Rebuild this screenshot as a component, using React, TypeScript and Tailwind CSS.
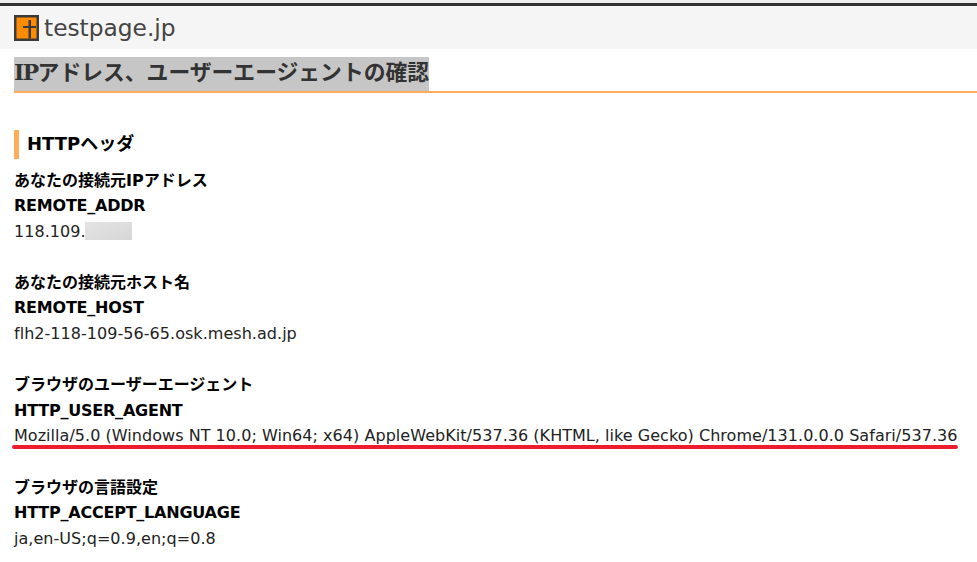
import React from "react";

const sections = [
  { title: "あなたの接続元IPアドレス", name: "REMOTE_ADDR", value: "118.109.", masked: true },
  { title: "あなたの接続元ホスト名", name: "REMOTE_HOST", value: "flh2-118-109-56-65.osk.mesh.ad.jp" },
  { title: "ブラウザのユーザーエージェント", name: "HTTP_USER_AGENT", value: "Mozilla/5.0 (Windows NT 10.0; Win64; x64) AppleWebKit/537.36 (KHTML, like Gecko) Chrome/131.0.0.0 Safari/537.36", marked: true },
  { title: "ブラウザの言語設定", name: "HTTP_ACCEPT_LANGUAGE", value: "ja,en-US;q=0.9,en;q=0.8" },
];

function Logo() {
  return (
    <svg width="25" height="26" viewBox="0 0 25 26" className="shrink-0">
      <rect width="25" height="26" fill="#3a3a3a" />
      <rect x="2.5" y="2.5" width="20" height="21" fill="#ff8c00" />
      <rect x="14.5" y="5" width="2.5" height="18.5" fill="#3a3a3a" />
      <rect x="9" y="11" width="13" height="2" fill="#3a3a3a" />
    </svg>
  );
}

export default function App() {
  return (
    <div className="h-[562px] overflow-hidden bg-white font-['DejaVu_Sans','Noto_Sans_CJK_JP',sans-serif] text-[16px] text-[#222]">
      <div className="bg-[#eeeeee] pt-[3px]">
        <div className="flex h-[46px] items-center gap-[5px] border-t-[3px] border-[#333] bg-[#f5f5f5] pl-[14px]">
          <Logo />
          <span className="text-[23.3px] leading-none text-[#444]">testpage.jp</span>
        </div>
      </div>
      <div className="pl-[14px] pt-[8px]">
        <div className="border-b-2 border-[#ffad5a]">
          <h1 className="h-[34px] w-[415px] bg-[#c6c6c6] text-[21.8px] font-bold leading-[32px] text-[#333] whitespace-nowrap">
            <span className="font-['DejaVu_Serif',serif] tracking-[-1.5px]">IP</span>アドレス、ユーザーエージェントの確認
          </h1>
        </div>
        <h2 className="mt-[37px] h-[29px] border-l-[5px] border-[#ffad5a] pl-[8px] text-[18px] font-bold leading-[27px] text-black">
          HTTPヘッダ
        </h2>
        <div className="mt-[8.5px] flex flex-col gap-[25.6px]">
          {sections.map((s) => (
            <div key={s.name} className="leading-[25.6px]">
              <div className="font-bold text-black">{s.title}</div>
              <div className="font-bold tracking-[-0.22px] text-black">{s.name}</div>
              <div className="relative whitespace-nowrap tracking-[0.04px]">
                {s.value}
                {s.masked && (
                  <span className="absolute left-[71px] top-[3px] h-[18px] w-[47px] bg-gradient-to-br from-[#e4e4e4] to-[#d6d6d6]" />
                )}
                {s.marked && (
                  <span className="absolute left-[-2px] top-[22px] h-[4px] w-[946px] rounded-full bg-[#ed1c2e]" />
                )}
              </div>
            </div>
          ))}
        </div>
      </div>
    </div>
  );
}
